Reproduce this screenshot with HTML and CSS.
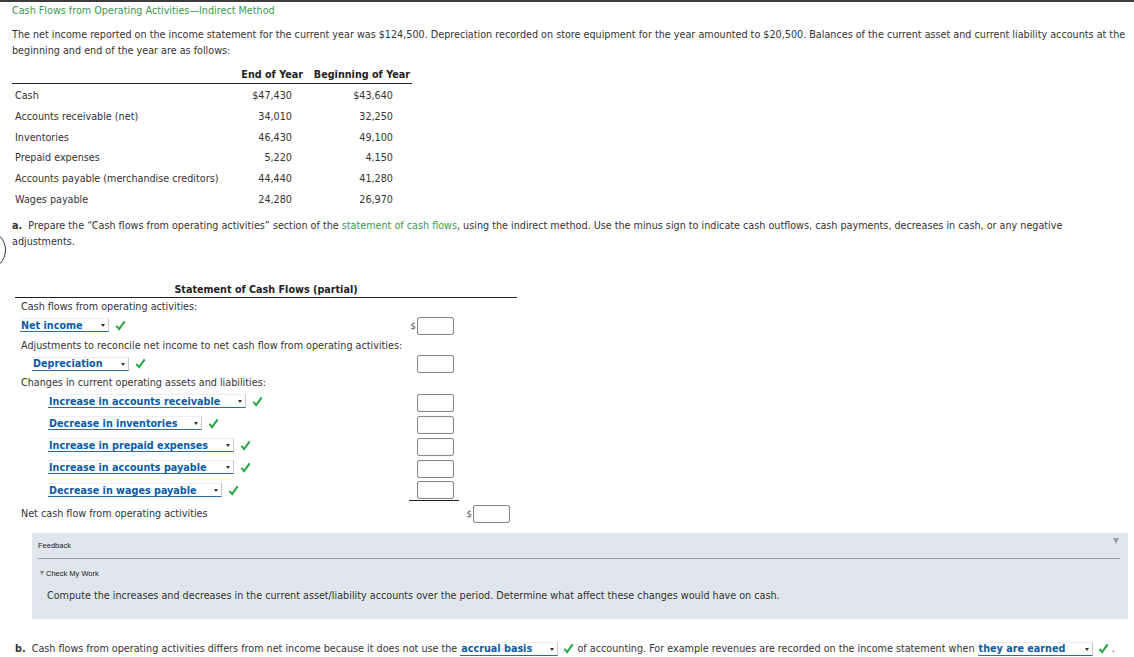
FILE: index.html
```html
<!DOCTYPE html>
<html>
<head>
<meta charset="utf-8">
<link rel="stylesheet" href="styles.css">
</head>
<body>
<div class="topbar"></div>
<div class="ring"></div>
<div class="page">
  <div class="title">Cash Flows from Operating Activities—Indirect Method</div>
  <p class="intro">The net income reported on the income statement for the current year was $124,500. Depreciation recorded on store equipment for the year amounted to $20,500. Balances of the current asset and current liability accounts at the<br>beginning and end of the year are as follows:</p>

  <table class="bal">
    <colgroup><col class="c1"><col class="c2"><col class="c3"></colgroup>
    <thead>
      <tr><th></th><th class="h1">End of Year</th><th class="h2">Beginning of Year</th></tr>
    </thead>
    <tbody>
      <tr><td class="lab">Cash</td><td class="v1">$47,430</td><td class="v2">$43,640</td></tr>
      <tr><td class="lab">Accounts receivable (net)</td><td class="v1">34,010</td><td class="v2">32,250</td></tr>
      <tr><td class="lab">Inventories</td><td class="v1">46,430</td><td class="v2">49,100</td></tr>
      <tr><td class="lab">Prepaid expenses</td><td class="v1">5,220</td><td class="v2">4,150</td></tr>
      <tr><td class="lab">Accounts payable (merchandise creditors)</td><td class="v1">44,440</td><td class="v2">41,280</td></tr>
      <tr><td class="lab">Wages payable</td><td class="v1">24,280</td><td class="v2">26,970</td></tr>
    </tbody>
  </table>

  <p class="qa"><b>a.</b>&nbsp; Prepare the “Cash flows from operating activities” section of the <span class="term">statement of cash flows</span>, using the indirect method. Use the minus sign to indicate cash outflows, cash payments, decreases in cash, or any negative<br>adjustments.</p>

  <div class="stmt">
    <div class="stitle">Statement of Cash Flows (partial)</div>

    <div class="row h18"><div class="lab l0">Cash flows from operating activities:</div><div class="col"></div><div class="col"></div></div>

    <div class="row h20">
      <div class="lab dl1 d0"><span class="dd w-ni">Net income<i class="arr"></i></span><svg class="chk" viewBox="0 0 12 12"><polyline points="1.5,6.5 4.5,10 10.5,1.5"/></svg></div>
      <div class="col"><span class="cur">$</span><span class="box"></span></div><div class="col"></div>
    </div>

    <div class="row h19"><div class="lab l0">Adjustments to reconcile net income to net cash flow from operating activities:</div><div class="col"></div><div class="col"></div></div>

    <div class="row h19">
      <div class="lab dl1 d1"><span class="dd w-dep">Depreciation<i class="arr"></i></span><svg class="chk" viewBox="0 0 12 12"><polyline points="1.5,6.5 4.5,10 10.5,1.5"/></svg></div>
      <div class="col"><span class="box"></span></div><div class="col"></div>
    </div>

    <div class="row h18"><div class="lab l0">Changes in current operating assets and liabilities:</div><div class="col"></div><div class="col"></div></div>

    <div class="row h22">
      <div class="lab dl d2"><span class="dd w-ar">Increase in accounts receivable<i class="arr"></i></span><svg class="chk" viewBox="0 0 12 12"><polyline points="1.5,6.5 4.5,10 10.5,1.5"/></svg></div>
      <div class="col"><span class="box"></span></div><div class="col"></div>
    </div>
    <div class="row h22">
      <div class="lab dl d2"><span class="dd w-inv">Decrease in inventories<i class="arr"></i></span><svg class="chk" viewBox="0 0 12 12"><polyline points="1.5,6.5 4.5,10 10.5,1.5"/></svg></div>
      <div class="col"><span class="box"></span></div><div class="col"></div>
    </div>
    <div class="row h22">
      <div class="lab dl d2"><span class="dd w-pp">Increase in prepaid expenses<i class="arr"></i></span><svg class="chk" viewBox="0 0 12 12"><polyline points="1.5,6.5 4.5,10 10.5,1.5"/></svg></div>
      <div class="col"><span class="box"></span></div><div class="col"></div>
    </div>
    <div class="row h22">
      <div class="lab dl d2"><span class="dd w-ap">Increase in accounts payable<i class="arr"></i></span><svg class="chk" viewBox="0 0 12 12"><polyline points="1.5,6.5 4.5,10 10.5,1.5"/></svg></div>
      <div class="col"><span class="box"></span></div><div class="col"></div>
    </div>
    <div class="row h21">
      <div class="lab d2"><span class="dd w-wp">Decrease in wages payable<i class="arr"></i></span><svg class="chk" viewBox="0 0 12 12"><polyline points="1.5,6.5 4.5,10 10.5,1.5"/></svg></div>
      <div class="col sum"><span class="box"></span></div><div class="col"></div>
    </div>

    <div class="row h24">
      <div class="lab l0">Net cash flow from operating activities</div>
      <div class="col"></div><div class="col"><span class="cur">$</span><span class="box"></span></div>
    </div>
  </div>

  <div class="feedback">
    <div class="fb-head"><span>Feedback</span><i class="fb-tri"></i></div>
    <div class="fb-sub"><i class="fb-small"></i>Check My Work</div>
    <div class="fb-text">Compute the increases and decreases in the current asset/liability accounts over the period. Determine what affect these changes would have on cash.</div>
  </div>

  <p class="qb"><b>b.</b>&nbsp; Cash flows from operating activities differs from net income because it does not use the <span class="dd w-acc">accrual basis<i class="arr"></i></span> <svg class="chk" viewBox="0 0 12 12"><polyline points="1.5,6.5 4.5,10 10.5,1.5"/></svg> of accounting. For example revenues are recorded on the income statement when <span class="dd w-ear">they are earned<i class="arr"></i></span> <svg class="chk" viewBox="0 0 12 12"><polyline points="1.5,6.5 4.5,10 10.5,1.5"/></svg> .</p>
</div>
</body>
</html>
```

FILE: styles.css
```css
html, body {
  margin: 0;
  padding: 0;
  background: #ffffff;
}
body {
  font-family: "DejaVu Sans", Verdana, sans-serif;
  font-size: 9.65px;
  color: #333333;
  width: 1134px;
  height: 657px;
  overflow: hidden;
  position: relative;
}
.topbar {
  height: 2px;
  background: #3c3c3c;
}
.ring {
  position: absolute;
  left: -34px;
  top: 230px;
  width: 38px;
  height: 38px;
  border: 1.5px solid #333;
  border-radius: 50%;
}
.page {
  padding: 1px 6px 0 12px;
}
.title {
  color: #3a9a4f;
  line-height: 16px;
}
.intro {
  margin: 8px 0 0;
  line-height: 16px;
  white-space: nowrap;
}
.bal {
  margin-top: 6px;
  border-collapse: collapse;
  table-layout: fixed;
  width: 400px;
  font-size: 9.65px;
}
.bal .c1 { width: 225px; }
.bal .c2 { width: 69px; }
.bal .c3 { width: 106px; }
.bal th {
  height: 18px;
  padding: 0;
  font-weight: bold;
  text-align: right;
  border-bottom: 1px solid #222;
  color: #222;
  vertical-align: middle;
}
.bal th.h1 { padding-right: 3px; }
.bal th.h2 { padding-right: 2px; }
.bal td {
  height: 20.8px;
  padding: 0;
  vertical-align: middle;
}
.bal td.lab { padding-left: 3px; }
.bal td.v1 { text-align: right; padding-right: 14px; }
.bal td.v2 { text-align: right; padding-right: 19px; }
.bal tbody tr:first-child td { height: 22px; }

.qa {
  margin: 8px 0 0;
  line-height: 16px;
  white-space: nowrap;
}
.term { color: #3a9a4f; }

.stmt {
  margin: 33px 0 0 3px;
  width: 502px;
}
.stitle {
  text-align: center;
  font-weight: bold;
  line-height: 14px;
  border-bottom: 1.5px solid #222;
  color: #222;
}
.row {
  display: grid;
  grid-template-columns: 1fr 56px 56px;
  padding-right: 7px;
  align-items: center;
}
.h18 { height: 18px; }
.h19 { height: 19px; }
.h20 { height: 20px; }
.h21 { height: 21px; }
.h22 { height: 22px; }
.h24 { height: 24px; margin-top: 1px; }
.row .lab {
  display: flex;
  align-items: center;
  white-space: nowrap;
}
.row .dl { margin-bottom: 3px; }
.row .dl1 { margin-bottom: 1px; }
.l0 { padding-left: 6px; }
.d0 { padding-left: 5px; }
.d1 { padding-left: 17px; }
.d2 { padding-left: 33px; }
.col {
  display: flex;
  justify-content: flex-end;
  align-items: center;
  height: 100%;
}
.sum {
  border-bottom: 1px solid #222;
  margin-right: -5px;
  padding-right: 5px;
  margin-left: 11px;
  box-sizing: border-box;
}
.cur {
  font-size: 9px;
  color: #555;
  margin-right: 1px;
}
.box {
  display: inline-block;
  width: 35px;
  height: 16px;
  border: 1px solid #8a8a8a;
  border-radius: 2px;
  background: #fff;
  box-shadow: inset 0 0 1px #bbb;
}

.dd {
  display: inline-flex;
  align-items: center;
  position: relative;
  box-sizing: border-box;
  height: 14px;
  font-weight: bold;
  color: #0b5aa2;
  border-bottom: 1.5px solid #2c6aa8;
  border-right: 1px solid #c8c8c8;
  border-top: 1px solid #eeeeee;
  padding-left: 1px;
  vertical-align: middle;
}
.arr {
  position: absolute;
  right: 3px;
  top: 5px;
  width: 0;
  height: 0;
  border-left: 2.5px solid transparent;
  border-right: 2.5px solid transparent;
  border-top: 3px solid #333;
}
.w-ni { width: 89px; }
.w-dep { width: 97px; }
.w-ar { width: 198px; }
.w-inv { width: 154px; }
.w-pp { width: 186px; }
.w-ap { width: 186px; }
.w-wp { width: 174px; }
.w-acc { width: 98px; }
.w-ear { width: 115px; }

.chk {
  width: 11px;
  height: 11px;
  margin-left: 6px;
  vertical-align: middle;
  fill: none;
  stroke: #27a844;
  stroke-width: 2.2;
}
.qb .chk { margin-left: 2px; }

.feedback {
  margin: 7px 0 0 20px;
  height: 86px;
  background: #dfe6ec;
  position: relative;
  box-sizing: border-box;
  padding: 0 8px 0 6px;
}
.fb-head {
  height: 25px;
  border-bottom: 1.5px solid #9aa0a6;
  display: flex;
  align-items: center;
  justify-content: space-between;
  font-family: "Liberation Sans", Arial, sans-serif;
  font-size: 7.5px;
  color: #222;
}
.fb-tri {
  width: 0;
  height: 0;
  border-left: 3px solid transparent;
  border-right: 3px solid transparent;
  border-top: 6px solid #9aa0a6;
  margin-right: 1px;
  margin-top: -8px;
}
.fb-sub {
  margin-top: 10px;
  display: flex;
  align-items: center;
  font-family: "Liberation Sans", Arial, sans-serif;
  font-size: 7.5px;
  color: #222;
  padding-left: 2px;
}
.fb-small {
  width: 0;
  height: 0;
  border-left: 2px solid transparent;
  border-right: 2px solid transparent;
  border-top: 4px solid #888;
  margin-right: 2px;
}
.fb-text {
  margin-top: 12px;
  padding-left: 9px;
  color: #333;
}

.qb {
  margin: 22px 0 0 3px;
  line-height: 16px;
  white-space: nowrap;
}
```
